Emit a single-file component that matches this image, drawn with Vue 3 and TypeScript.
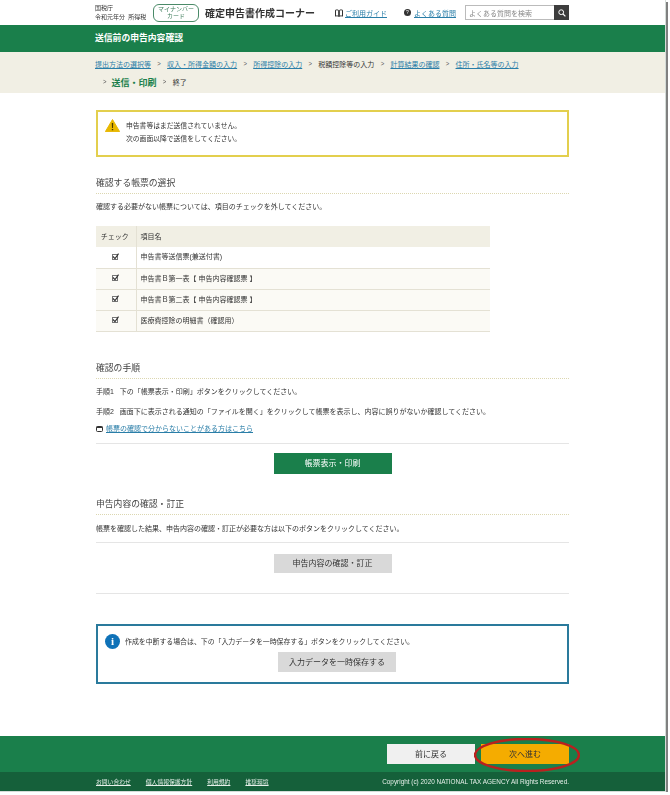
<script setup lang="ts">
const crumbs = [
  { t: '提出方法の選択等', link: true },
  { t: '収入・所得金額の入力', link: true },
  { t: '所得控除の入力', link: true },
  { t: '税額控除等の入力', link: false },
  { t: '計算結果の確認', link: true },
  { t: '住所・氏名等の入力', link: true },
]
const rows = [
  '申告書等送信票(兼送付書)',
  '申告書Ｂ第一表【 申告内容確認票 】',
  '申告書Ｂ第二表【 申告内容確認票 】',
  '医療費控除の明細書（確認用）',
]
const footLinks = ['お問い合わせ', '個人情報保護方針', '利用規約', '推奨環境']
</script>

<template>
  <div class="page">
    <header class="top">
      <div class="org">
        <div>国税庁</div>
        <div>令和元年分&nbsp;&nbsp;所得税</div>
      </div>
      <div class="mynum">マイナンバー<br />カード</div>
      <div class="corner">確定申告書作成コーナー</div>
      <a class="guide">
        <svg width="8" height="8" viewBox="0 0 8 8"><path d="M.5 1.2C1.6.7 2.8.8 3.7 1.5V7.4C2.8 6.8 1.6 6.7.5 7.2ZM7.5 1.2C6.4.7 5.2.8 4.3 1.5V7.4C5.2 6.8 6.4 6.7 7.5 7.2Z" fill="none" stroke="#333" stroke-width="1" /></svg>
        <span>ご利用ガイド</span>
      </a>
      <a class="faq">
        <span class="q">?</span>
        <span>よくある質問</span>
      </a>
      <div class="search">
        <span class="ph">よくある質問を検索</span>
        <span class="sbtn">
          <svg width="8" height="8" viewBox="0 0 8 8"><circle cx="3.2" cy="3.2" r="2.4" fill="none" stroke="#fff" stroke-width="1" /><path d="M5 5L7.4 7.4" stroke="#fff" stroke-width="1.2" /></svg>
        </span>
      </div>
    </header>
    <div class="band"><span>送信前の申告内容確認</span></div>
    <nav class="crumbs">
      <div class="cr1">
        <template v-for="(c, i) in crumbs" :key="c.t">
          <span v-if="i" class="sep">&gt;</span>
          <a :class="c.link ? 'lnk' : 'plain'">{{ c.t }}</a>
        </template>
      </div>
      <div class="cr2">
        <span class="sep">&gt;</span>
        <strong>送信・印刷</strong>
        <span class="sep">&gt;</span>
        <span class="plain">終了</span>
      </div>
    </nav>

    <main class="main">
      <div class="warn">
        <svg class="warn-ic" width="15" height="13" viewBox="0 0 15 13"><path d="M7.5.5L14.6 12.6H.4Z" fill="#e8b800" stroke="#e8b800" stroke-linejoin="round" /><path d="M6.8 4H8.2L8 9H7ZM6.8 10H8.2V11.3H6.8Z" fill="#4a3b00" /></svg>
        <div>
          <p>申告書等はまだ送信されていません。</p>
          <p>次の画面以降で送信をしてください。</p>
        </div>
      </div>

      <h2 class="h1st">確認する帳票の選択</h2>
      <p class="txt t1">確認する必要がない帳票については、項目のチェックを外してください。</p>
      <table class="tbl">
        <thead>
          <tr><th class="c1">チェック</th><th>項目名</th></tr>
        </thead>
        <tbody>
          <tr v-for="(r, i) in rows" :key="r" :class="{ alt: i > 0 }">
            <td class="c1"><span class="cb"><svg width="7" height="7" viewBox="0 0 7 7"><path d="M1 3.5L3 5.6L6.6.6" fill="none" stroke="#333" stroke-width="1.2" /></svg></span></td>
            <td>{{ r }}</td>
          </tr>
        </tbody>
      </table>

      <h2 class="h2nd">確認の手順</h2>
      <p class="txt s1">手順1&nbsp;&nbsp;&nbsp;下の「帳票表示・印刷」ボタンをクリックしてください。</p>
      <p class="txt s2">手順2&nbsp;&nbsp;&nbsp;画面下に表示される通知の「ファイルを開く」をクリックして帳票を表示し、内容に誤りがないか確認してください。</p>
      <p class="txt s3">
        <svg width="7" height="6" viewBox="0 0 7 6"><rect x=".5" y=".5" width="6" height="5" rx="1" fill="none" stroke="#333" /><rect x=".5" y=".5" width="6" height="1.5" fill="#333" /></svg>
        <a class="lnk">帳票の確認で分からないことがある方はこちら</a>
      </p>
      <div class="btn-row r1"><button class="btn green">帳票表示・印刷</button></div>

      <h2 class="h3rd">申告内容の確認・訂正</h2>
      <p class="txt t3">帳票を確認した結果、申告内容の確認・訂正が必要な方は以下のボタンをクリックしてください。</p>
      <div class="btn-row r2"><button class="btn gray">申告内容の確認・訂正</button></div>
      <div class="rule"></div>

      <div class="info">
        <div class="info-line">
          <span class="i">i</span>
          <span>作成を中断する場合は、下の「入力データを一時保存する」ボタンをクリックしてください。</span>
        </div>
        <button class="btn gray save">入力データを一時保存する</button>
      </div>
    </main>

    <div class="actions">
      <div class="act-in">
        <button class="back">前に戻る</button>
        <button class="next">次へ進む</button>
        <svg class="ring" width="106" height="34" viewBox="0 0 106 34"><ellipse cx="53" cy="17" rx="52" ry="16" fill="none" stroke="#b9211f" stroke-width="2.4" /></svg>
      </div>
    </div>
    <footer class="foot">
      <div class="foot-in">
        <div class="flinks"><a v-for="l in footLinks" :key="l">{{ l }}</a></div>
        <span class="copy">Copyright (c) 2020 NATIONAL TAX AGENCY All Rights Reserved.</span>
      </div>
    </footer>
  </div>
</template>

<style>
html, body { margin: 0; background: #fff; }
</style>

<style scoped>
.page {
  box-sizing: border-box;
  width: 666px;
  height: 792px;
  display: flex;
  flex-direction: column;
  font-family: "Liberation Sans", "Noto Sans CJK JP", sans-serif;
  color: #333;
  background: #fff;
  border-right: 1px solid #d5dcd8;
  border-bottom: 1px solid #d5dcd8;
  box-shadow: 2px 2px 0 #808080;
  overflow: hidden;
  filter: blur(0.3px);
}
p, h2 { margin: 0; font-weight: normal; }
.top {
  height: 25px;
  padding-left: 95px;
  display: flex;
  align-items: center;
  flex: none;
}
.org { font-size: 6px; line-height: 9px; width: 58px; padding-top: 1px; white-space: nowrap; }
.mynum {
  box-sizing: border-box;
  width: 46px;
  height: 18px;
  border: 1px solid #4a8a68;
  border-radius: 6px;
  font-size: 6px;
  line-height: 7px;
  text-align: center;
  padding-top: 1px;
  color: #3a7a58;
  white-space: nowrap;
}
.corner { margin-left: 6px; width: 111px; font-size: 10px; font-weight: bold; color: #333; white-space: nowrap; }
.guide, .faq { display: flex; align-items: center; font-size: 7px; white-space: nowrap; }
.guide { margin-left: 19px; gap: 2px; width: 69px; }
.guide span, .faq span:last-child { color: #2a7ea8; text-decoration: underline; }
.faq { width: 61px; gap: 3px; }
.q {
  width: 7px; height: 7px; border-radius: 50%; background: #333; color: #fff;
  font-size: 5px; line-height: 7px; text-align: center;
}
.search {
  box-sizing: border-box;
  width: 104px;
  height: 15px;
  border: 1px solid #bbb;
  display: flex;
  align-items: center;
  justify-content: space-between;
}
.ph { font-size: 7px; color: #888; padding-left: 3px; white-space: nowrap; }
.sbtn { width: 15px; height: 15px; margin-right: -1px; background: #3d3d3d; display: flex; align-items: center; justify-content: center; }
.band {
  flex: none;
  height: 27px;
  background: #1a7f4b;
  color: #fff;
  font-size: 8.8px;
  font-weight: bold;
  line-height: 27px;
  padding-left: 95px;
}
.crumbs {
  flex: none;
  height: 41px;
  background: #f1efe4;
  padding-left: 95px;
  box-sizing: border-box;
  font-size: 7px;
  padding-top: 6px;
}
.cr1, .cr2 { display: flex; align-items: center; white-space: nowrap; }
.cr1 { height: 11px; }
.cr2 { height: 14px; margin-top: 6px; padding-left: 8px; }
.sep { color: #555; font-size: 6px; margin: 0 6.3px; transform: scaleY(1.2); }
.cr2 .sep:first-child { margin-left: 0; margin-right: 5px; }
.lnk { color: #2a7ea8; text-decoration: underline; }
.plain { color: #333; }
.cr2 strong { font-size: 9px; color: #1a7f4b; font-weight: bold; }
.main { flex: 1; padding: 17px 0 0 96px; width: 473px; }
.warn {
  box-sizing: border-box;
  height: 47px;
  border: 2px solid #e3cf4e;
  display: flex;
  padding: 8px 0 0 7px;
  gap: 6px;
  font-size: 6.8px;
  line-height: 12.5px;
}
.warn-ic { margin-top: -1px; }
.h1st, .h2nd, .h3rd {
  font-size: 8.8px;
  line-height: 12px;
  color: #444;
  border-bottom: 1px dotted #dcd7b0;
}
.h1st { margin-top: 20px; padding-bottom: 4px; height: 12px; }
.h2nd { margin-top: 30px; padding-bottom: 4px; height: 12px; }
.h3rd { margin-top: 24px; padding-bottom: 4px; height: 12px; }
.txt { font-size: 7px; line-height: 10px; color: #333; }
.t1 { margin-top: 8px; }
.tbl {
  margin-top: 14px;
  width: 394px;
  border-collapse: collapse;
  font-size: 7px;
  color: #333;
  table-layout: fixed;
}
.tbl th {
  height: 21px;
  background: #f1efe4;
  font-weight: normal;
  text-align: left;
  padding: 0 0 2px 4px;
  box-sizing: border-box;
  font-size: 7px;
}
.tbl td {
  height: 21px;
  padding: 0 0 2px 4px;
  box-sizing: border-box;
  border-bottom: 1px solid #e4e1d4;
}
.tbl .alt td { background: #fbfaf5; }
.tbl .c1 { width: 40px; border-right: 1px solid #e4e1d4; text-align: center; padding: 0 2px 2px 0; }
.cb {
  display: inline-block;
  box-sizing: border-box;
  width: 6px;
  height: 6px;
  border: 1px solid #777;
  background: #fff;
  vertical-align: middle;
  line-height: 0;
}
.cb svg { margin: -2px 0 0 -1px; }
.s1 { margin-top: 8px; }
.s2 { margin-top: 10px; }
.s3 {
  margin-top: 7px;
  padding-bottom: 9px;
  border-bottom: 1px solid #e5e5e5;
  display: flex;
  align-items: center;
  gap: 3px;
}
.btn-row { display: flex; justify-content: center; }
.r1 { margin-top: 9px; }
.btn {
  border: 0;
  padding: 0 0 1px;
  width: 118px;
  height: 21px;
  font-family: inherit;
  font-size: 8px;
}
.green { background: #1a7f4b; color: #fff; }
.gray { background: #d9d9d9; color: #333; }
.t3 { margin-top: 9px; padding-bottom: 8px; border-bottom: 1px solid #e5e5e5; }
.r2 { margin-top: 11px; }
.r2 .btn { height: 19px; }
.rule { margin-top: 20px; border-top: 1px solid #e5e5e5; }
.info {
  box-sizing: border-box;
  margin-top: 30px;
  height: 60px;
  border: 2px solid #2a7a9c;
  display: flex;
  flex-direction: column;
  align-items: center;
  padding: 8px 0 0 0;
}
.info-line {
  align-self: flex-start;
  display: flex;
  align-items: center;
  padding-left: 7px;
  gap: 5px;
  font-size: 6.9px;
  color: #333;
}
.i {
  width: 15px; height: 15px; border-radius: 50%; background: #0f72b8; color: #fff;
  font: bold 11px/15px "Liberation Serif", serif; text-align: center;
  flex: none;
}
.save { height: 20px; margin-top: 3px; margin-left: 9px; }
.actions { flex: none; height: 36px; background: #1a7f4b; }
.act-in { position: relative; width: 473px; margin-left: 96px; height: 100%; display: flex; justify-content: flex-end; padding-top: 8px; box-sizing: border-box; }
.back, .next { border: 0; padding: 0 0 1px; width: 88px; height: 20px; font-family: inherit; font-size: 8px; }
.back { background: #f0f0f0; color: #333; margin-right: 6px; }
.next { background: #f5ac00; color: #333; }
.ring { position: absolute; right: -11px; top: 2px; }
.foot { flex: none; height: 19px; background: #15603a; }
.foot-in { width: 473px; margin-left: 96px; height: 100%; display: flex; justify-content: space-between; align-items: center; }
.flinks { display: flex; gap: 15px; font-size: 5.8px; }
.flinks a { color: #e6efe9; text-decoration: underline; }
.copy { font-size: 6.4px; color: #e6efe9; white-space: nowrap; }
</style>
